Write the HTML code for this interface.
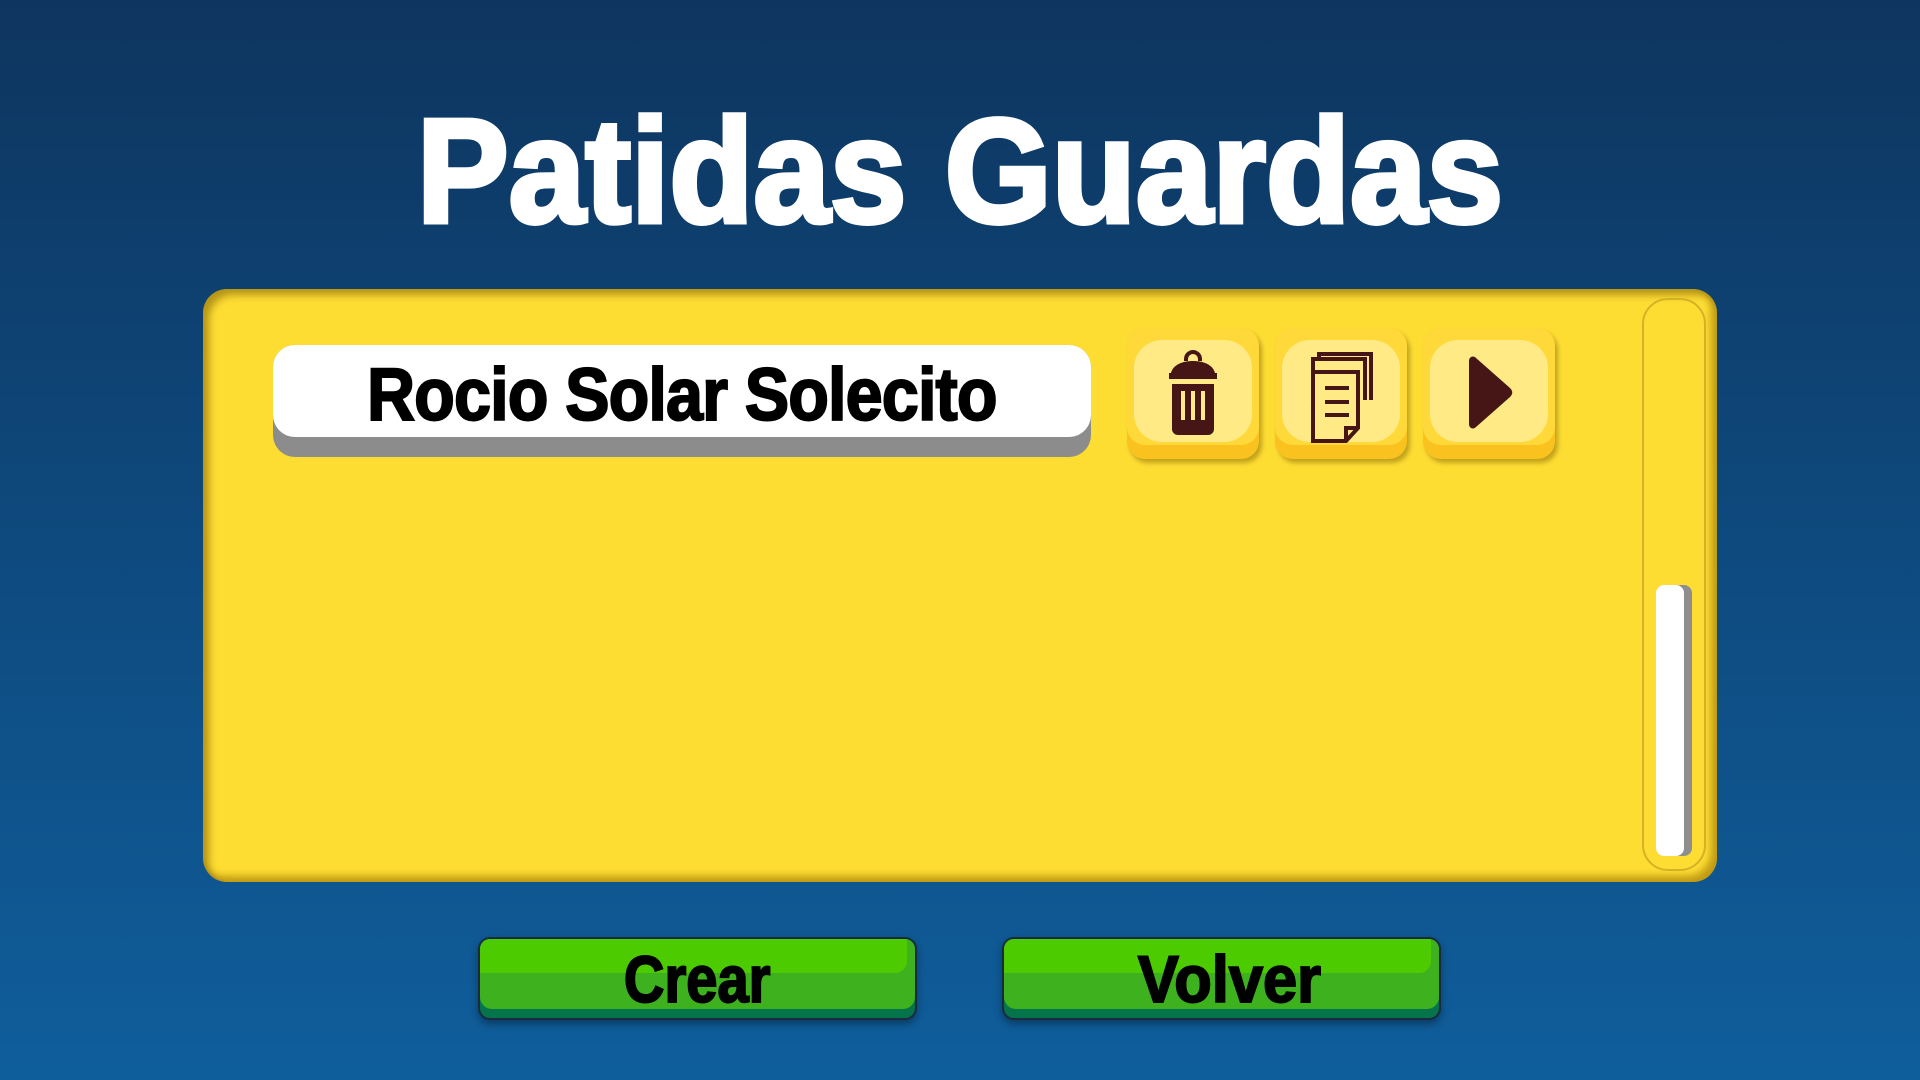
<!DOCTYPE html>
<html><head><meta charset="utf-8"><style>
*{margin:0;padding:0;box-sizing:border-box}
body{width:1920px;height:1080px;overflow:hidden;background:linear-gradient(#0e355f,#0f5e9c);font-family:"Liberation Sans",sans-serif;position:relative}
.title{position:absolute;left:0;width:1920px;top:97px;text-align:center;color:#fff;font-weight:bold;font-size:148px;line-height:150px;-webkit-text-stroke:5px #fff}
.title span{display:inline-block;transform:scaleX(.93)}
.panel{position:absolute;left:203px;top:289px;width:1514px;height:593px;background:#fedd33;border-radius:24px;box-shadow:inset 6px 6px 8px rgba(120,90,0,.55),inset -6px -6px 8px rgba(150,110,0,.6)}
.bar{position:absolute;left:273px;top:345px;width:818px;height:112px;background:#8c8c8c;border-radius:22px}
.bar .w{position:absolute;left:0;top:0;width:818px;height:92px;background:#fff;border-radius:22px;text-align:center}
.bar .w span{display:inline-block;font-weight:bold;font-size:74px;line-height:100px;transform:scaleX(.9);color:#000;letter-spacing:-1px;-webkit-text-stroke:2px #000}
.btn{position:absolute;top:328px;width:132px;height:131px;background:#f9c21e;border-radius:18px;box-shadow:3px 4px 5px rgba(120,90,0,.45)}
.btn .t{position:absolute;left:0;top:0;width:132px;height:117px;background:#ffd93a;border-radius:18px}
.btn .in{position:absolute;left:7px;top:12px;width:118px;height:102px;background:#ffea86;border-radius:28px}
.btn svg{position:absolute;left:0;top:0}
.track{position:absolute;left:1642px;top:298px;width:64px;height:573px;border:2px solid #d4b228;border-radius:26px}
.thumb{position:absolute;left:1656px;top:585px;width:36px;height:271px;background:#8e8e8e;border-radius:8px}
.thumb div{width:28px;height:271px;background:#fff;border-radius:8px}
.g{position:absolute;top:937px;width:439px;height:83px;background:#06744a;border:2px solid #1a2a40;border-radius:12px;box-shadow:0 4px 8px rgba(0,0,0,.35);overflow:hidden;text-align:center}
.g .a{position:absolute;left:0;top:0;right:0;height:70px;background:#3db21e;border-radius:0 0 12px 12px}
.g .b{position:absolute;left:0;top:0;right:8px;height:34px;background:#4ccc00;border-radius:0 0 12px 0}
.g span{position:relative;display:inline-block;font-weight:bold;font-size:66px;line-height:80px;color:#000;-webkit-text-stroke:2px #000}
</style></head><body>
<div class="title"><span>Patidas Guardas</span></div>
<div class="panel"></div>
<div class="bar"><div class="w"><span>Rocio Solar Solecito</span></div></div>
<div class="btn" style="left:1127px"><div class="t"></div><div class="in"></div>
<svg width="132" height="131" viewBox="0 0 132 131"><g fill="#461616">
<path d="M57 31a9 9 0 0 1 18 0v2h-4v-2a5 5 0 0 0-10 0v2h-4z"/>
<path d="M44 45c2-8 11-12 22-12s20 4 22 12h2v6H42v-6z"/>
<path d="M45 56h42v45a6 6 0 0 1-6 6H51a6 6 0 0 1-6-6z"/></g>
<g fill="#ffea86"><rect x="54" y="63" width="4" height="29"/><rect x="64" y="63" width="4" height="29"/><rect x="74" y="63" width="4" height="29"/></g></svg></div>
<div class="btn" style="left:1275px"><div class="t"></div><div class="in"></div>
<svg width="132" height="131" viewBox="0 0 132 131"><g fill="none" stroke="#461616" stroke-width="4">
<path d="M44 31V26h52v46"/><path d="M38 44V31h52v41"/>
<path d="M38 44h45v56l-12 13H38z"/><path d="M83 100H71v13"/></g>
<g fill="#461616"><rect x="50" y="58" width="24" height="4"/><rect x="50" y="72" width="24" height="4"/><rect x="50" y="85" width="24" height="4"/></g></svg></div>
<div class="btn" style="left:1423px"><div class="t"></div><div class="in"></div>
<svg width="132" height="131" viewBox="0 0 132 131"><path fill="#461616" d="M46 33c0-4 4-6 7-3l34 30c3 3 3 6 0 9L53 99c-3 3-7 1-7-3z"/></svg></div>
<div class="track"></div>
<div class="thumb"><div></div></div>
<div class="g" style="left:478px"><div class="a"></div><div class="b"></div><span style="transform:scaleX(.85)">Crear</span></div>
<div class="g" style="left:1002px"><div class="a"></div><div class="b"></div><span style="transform:translateX(8px) scaleX(.93)">Volver</span></div>
</body></html>
